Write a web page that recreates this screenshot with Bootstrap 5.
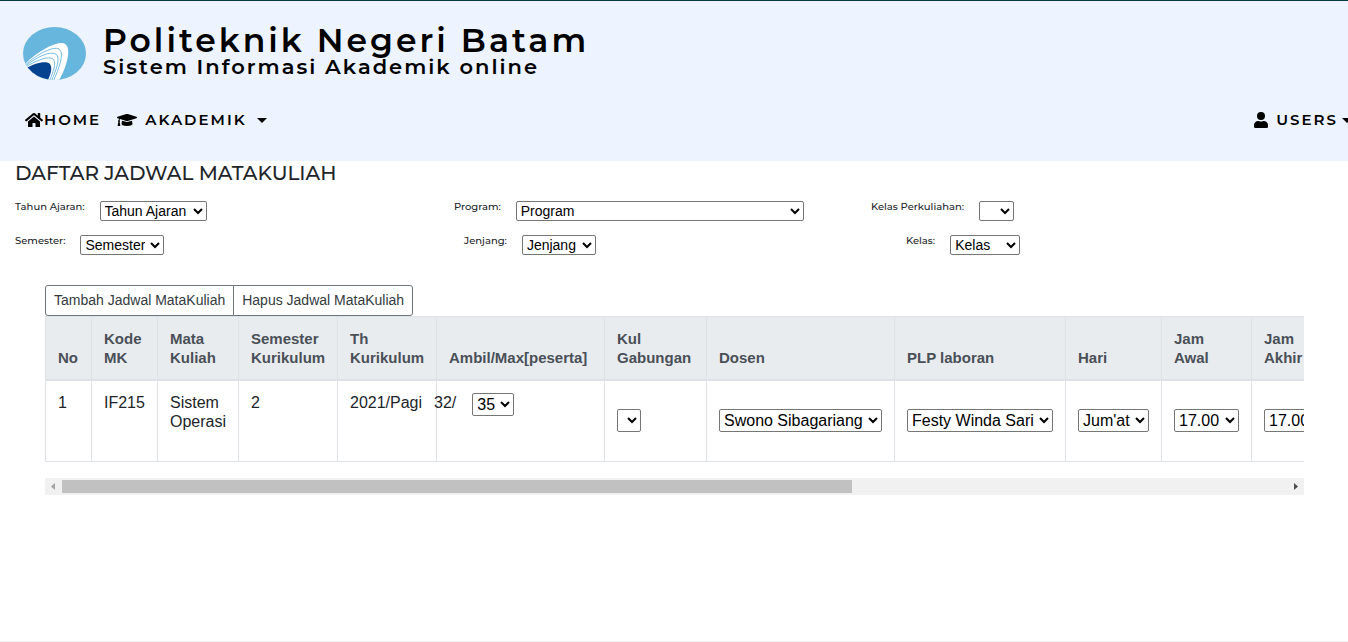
<!DOCTYPE html>
<html lang="id">
<head>
<meta charset="utf-8">
<meta name="viewport" content="width=device-width, initial-scale=1">
<title>Sistem Informasi Akademik online</title>
<link href="https://cdn.jsdelivr.net/npm/bootstrap@5.3.0/dist/css/bootstrap.min.css" rel="stylesheet">
<style>
body{font-family:"Liberation Sans",Arial,sans-serif;font-size:16px;line-height:19px;color:#212529;overflow-x:hidden}
.brand-font,.site-header{font-family:Montserrat,Inter,sans-serif}
.site-header{background:#edf4ff;border-top:1px solid #003b40;color:#000;padding:25px 0 29px 22px;overflow:hidden}
.site-logo{width:65px;height:55px}
.site-name{font-size:33px;line-height:28px;font-weight:600;letter-spacing:3px}
.site-sub{font-size:21px;line-height:26px;font-weight:600;letter-spacing:2px}
.main-nav{margin-top:27px;margin-right:-4px}
.main-nav .nav-link{color:#000;font-size:15px;line-height:24px;font-weight:600;letter-spacing:2px;padding:0}
.main-nav .dropdown-toggle::after{border-top:5px solid;border-right:5px solid transparent;border-left:5px solid transparent;margin-left:4px}
.page-title{font-size:20px;line-height:24px;font-weight:500}
.filters{padding:0 15px}
.filter-row{display:grid;margin-bottom:14px}
.filter-row label{font-size:10px;line-height:12px;font-weight:500}
.filter-row .field{display:flex;gap:15px}
.filter-a{grid-template-columns:439fr 417fr 462fr}
.filter-b{grid-template-columns:449fr 442fr 427fr}
.plain-select{font-family:"Liberation Sans",Arial,sans-serif;font-size:14px;line-height:16px;height:20px;background:#fff;border:1px solid #767676;border-radius:2px;color:#000;padding:0 2px 0 0}
.table .plain-select{font-size:16px;height:23px}
.w-program{width:288px}.w-short{width:35px}.w-kelas{width:70px}.w-tiny{width:24px}
.schedule{padding:30px 44px 0 45px}
.btn-tool{font-size:14px;line-height:21px;padding:4px 8px;color:#343a40;border:1px solid #6c757d;border-radius:3px;background:#fff}
.schedule-table{width:1593px;table-layout:fixed;border-color:#dee2e6;color:#212529}
.schedule-table>thead th{background:#e9ecef;color:#495057;font-size:15px;font-weight:700;vertical-align:bottom;padding:12px;border-bottom:2px solid #dee2e6;height:63px}
.schedule-table>tbody td{padding:12px;height:81px;vertical-align:top}
.schedule-table>tbody td.pick-cell{padding-top:28px}
.schedule-table>tbody td.quota-cell{padding-left:0}
.quota{margin-left:-3px}
.scroll-track{height:17px;background:#f1f1f1}
.scroll-end{width:17px;height:17px;flex:none}
.scroll-thumb{height:13px;background:#c1c1c1;width:64.5%}
.site-footer{border-top:1px solid #eee}
</style>
</head>
<body class="d-flex flex-column min-vh-100">
<header class="site-header">
  <div class="d-flex">
    <svg class="site-logo" viewBox="0 0 65 55" aria-hidden="true">
      <defs><clipPath id="disc"><ellipse cx="32.500" cy="27.500" rx="31.500" ry="26.500"/></clipPath></defs>
      <g clip-path="url(#disc)">
        <rect width="65" height="55" fill="#67b6dd"/>
        <path d="M3 38C16 25 31 17 40 17C51 18 46 39 36 56L20 56L0 46Z" fill="#fff"/>
        <path d="M3 43C12 37 25 34 28 38C31 43 28 50 25 56L0 56Z" fill="#05428f"/>
        <g fill="none" stroke="#67b6dd" stroke-width=".9">
          <path d="M2 40C16 27 32 20 37 23C43 27 37 42 31 56"/><path d="M2 41C16 30 28 25 34 28C39 32 34 44 29 56"/><path d="M2 42C16 33 27 30 31 33C35 37 31 46 27 56"/>
        </g>
      </g>
    </svg>
    <div class="ms-3">
      <h1 class="site-name mb-0">Politeknik Negeri Batam</h1>
      <h2 class="site-sub mb-0">Sistem Informasi Akademik online</h2>
    </div>
  </div>
  <nav class="main-nav d-flex justify-content-between" aria-label="Utama">
    <div class="d-flex gap-3">
      <a class="nav-link d-flex align-items-center" href="#"><svg width="22" height="16" viewBox="-64 0 640 512" aria-hidden="true"><path d="M280 148 96 300v164a16 16 0 0 0 16 16l112-1a16 16 0 0 0 16-16v-95a16 16 0 0 1 16-16h64a16 16 0 0 1 16 16v95a16 16 0 0 0 16 16h112a16 16 0 0 0 16-16V300L296 148a12 12 0 0 0-16 0zM572 251l-84-69V44a12 12 0 0 0-12-12h-56a12 12 0 0 0-12 12v72l-90-73a48 48 0 0 0-61 0L4 251a12 12 0 0 0-1 17l25 31a12 12 0 0 0 17 2L280 107a12 12 0 0 1 16 0l235 194a12 12 0 0 0 17-2l26-31a12 12 0 0 0-2-17z"/></svg>HOME</a>
      <a class="nav-link dropdown-toggle d-flex align-items-center" href="#"><svg class="me-2" width="20" height="16" viewBox="0 0 640 512" aria-hidden="true"><path d="M622 153 343 67a80 80 0 0 0-46 0L18 153c-24 7-24 39 0 46l49 15c-11 13-17 29-18 47a32 32 0 0 0-3 53L20 428c-2 10 5 20 16 20h56c11 0 18-10 16-20L82 314a32 32 0 0 0-2-53c1-15 8-28 21-37l196 61c14 4 30 5 46 0l279-86c24-7 24-39 0-46zM352 315c-31 9-56 3-65 0l-127-39-16 108c0 35 79 64 176 64s176-29 176-64l-16-108z"/></svg>AKADEMIK&nbsp;</a>
    </div>
    <a class="nav-link dropdown-toggle d-flex align-items-center" href="#"><svg class="me-2" width="14" height="16" viewBox="0 0 448 512" aria-hidden="true"><path d="M224 256a128 128 0 1 0 0-256 128 128 0 0 0 0 256zm90 32h-17a174 174 0 0 1-146 0h-17A134 134 0 0 0 0 422v42a48 48 0 0 0 48 48h352a48 48 0 0 0 48-48v-42a134 134 0 0 0-134-134z"/></svg>USERS</a>
  </nav>
</header>
<main class="flex-grow-1">
  <section class="filters brand-font">
    <h3 class="page-title mb-3">DAFTAR JADWAL MATAKULIAH</h3>
    <div class="filter-row filter-a">
      <div class="field"><label for="tahun">Tahun Ajaran:</label><select id="tahun" class="plain-select"><option>Tahun Ajaran</option></select></div>
      <div class="field"><label for="program">Program:</label><select id="program" class="plain-select w-program"><option>Program</option></select></div>
      <div class="field"><label for="perkuliahan">Kelas Perkuliahan:</label><select id="perkuliahan" class="plain-select w-short"><option></option></select></div>
    </div>
    <div class="filter-row filter-b mb-0">
      <div class="field"><label for="semester">Semester:</label><select id="semester" class="plain-select"><option>Semester</option></select></div>
      <div class="field"><label for="jenjang">Jenjang:</label><select id="jenjang" class="plain-select"><option>Jenjang</option></select></div>
      <div class="field"><label for="kelas">Kelas:</label><select id="kelas" class="plain-select w-kelas"><option>Kelas</option></select></div>
    </div>
  </section>
  <section class="schedule">
    <div class="btn-group d-flex w-auto">
      <button type="button" class="btn btn-tool flex-grow-0">Tambah Jadwal MataKuliah</button>
      <button type="button" class="btn btn-tool flex-grow-0">Hapus Jadwal MataKuliah</button>
    </div>
    <div class="overflow-hidden">
      <table class="table table-bordered schedule-table mb-3">
        <colgroup><col style="width:46px"><col style="width:66px"><col style="width:81px"><col style="width:99px"><col style="width:99px"><col style="width:168px"><col style="width:102px"><col style="width:188px"><col style="width:171px"><col style="width:96px"><col style="width:90px"><col></colgroup>
        <thead><tr><th>No</th><th>Kode MK</th><th>Mata Kuliah</th><th>Semester Kurikulum</th><th>Th Kurikulum</th><th>Ambil/Max[peserta]</th><th>Kul Gabungan</th><th>Dosen</th><th>PLP laboran</th><th>Hari</th><th>Jam Awal</th><th>Jam<br>Akhir</th></tr></thead>
        <tbody><tr>
          <td>1</td><td>IF215</td><td>Sistem Operasi</td><td>2</td><td>2021/Pagi</td>
          <td class="quota-cell"><div class="quota d-flex"><span>32/</span><select class="plain-select ms-3" aria-label="Maksimum peserta"><option>35</option></select></div></td>
          <td class="pick-cell"><select class="plain-select w-tiny" aria-label="Kuliah gabungan"><option></option></select></td>
          <td class="pick-cell"><select class="plain-select" aria-label="Dosen"><option>Swono Sibagariang</option></select></td>
          <td class="pick-cell"><select class="plain-select" aria-label="PLP laboran"><option>Festy Winda Sari</option></select></td>
          <td class="pick-cell"><select class="plain-select" aria-label="Hari"><option>Jum'at</option></select></td>
          <td class="pick-cell"><select class="plain-select" aria-label="Jam awal"><option>17.00</option></select></td>
          <td class="pick-cell"><select class="plain-select" aria-label="Jam akhir"><option>17.00</option></select></td>
        </tr></tbody>
      </table>
    </div>
    <div class="scroll-track d-flex align-items-center" aria-hidden="true">
      <svg class="scroll-end" viewBox="0 0 17 17"><path d="M10 5v7L6 8.500z" fill="#a3a3a3"/></svg>
      <div class="flex-grow-1"><div class="scroll-thumb"></div></div>
      <svg class="scroll-end" viewBox="0 0 17 17"><path d="M7 5v7l4-3.500z" fill="#505050"/></svg>
    </div>
  </section>
</main>
<footer class="site-footer"></footer>
<script src="https://cdn.jsdelivr.net/npm/bootstrap@5.3.0/dist/js/bootstrap.bundle.min.js"></script>
</body>
</html>
